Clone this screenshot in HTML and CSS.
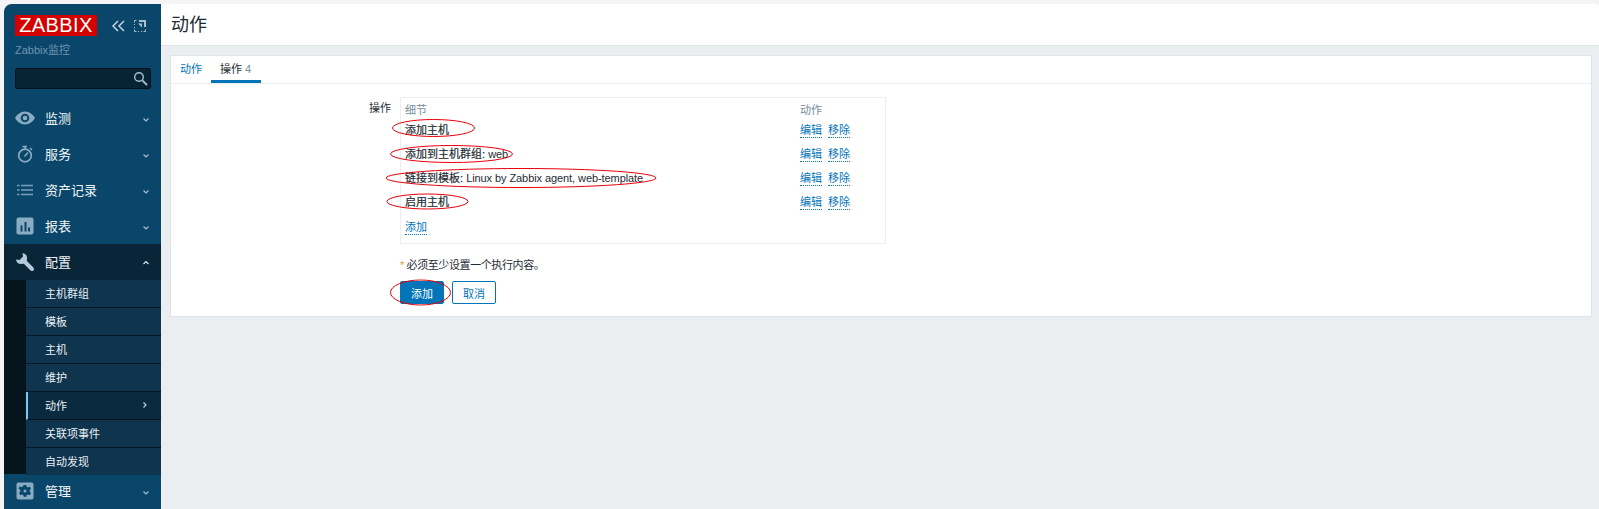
FILE: index.html
```html
<!DOCTYPE html>
<html lang="zh">
<head>
<meta charset="utf-8">
<title>动作</title>
<link rel="stylesheet" href="styles.css">
</head>
<body>
<div class="app">
  <aside class="sidebar">
    <div class="brand">
      <div class="logo">ZABBIX</div>
      <div class="brand-tools">
        <svg class="tool" width="16" height="14" viewBox="0 0 16 14"><path d="M7 2 2 7l5 5M13 2 8 7l5 5" fill="none" stroke="#c3d3de" stroke-width="1.500"/></svg>
        <svg class="tool" width="14" height="14" viewBox="0 0 14 14"><path d="M1.500 3.500V1.500H3.500M1.500 5V6M1.500 8V9M1.500 10.500V12.500H3.500M5 12.500H6M8 12.500H9M10.500 12.500H12.500V10.500" fill="none" stroke="#a9c0cf" stroke-width="1"/><path d="M6 1h7v7h-2V3H6z" fill="#a9c0cf"/><path d="M5 4.500h4v4z" fill="#a9c0cf"/></svg>
      </div>
    </div>
    <div class="server">Zabbix监控</div>
    <div class="search">
      <svg width="15" height="15" viewBox="0 0 15 15"><circle cx="6" cy="6" r="4.300" fill="none" stroke="#a9c0cf" stroke-width="1.400"/><path d="M9.300 9.300 14 14" stroke="#a9c0cf" stroke-width="1.800"/></svg>
    </div>
    <nav class="menu">
      <div class="menu-item">
        <svg class="mi" width="20" height="20" viewBox="0 0 20 20"><path fill-rule="evenodd" fill="#8aabc2" d="M10 3.500c4.500 0 8 3.200 10 6.500-2 3.300-5.500 6.500-10 6.500S2 13.300 0 10c2-3.300 5.500-6.500 10-6.500zm0 2.200a4.300 4.300 0 1 0 0 8.600 4.300 4.300 0 0 0 0-8.600zm0 2a2.300 2.300 0 1 1 0 4.600 2.300 2.300 0 0 1 0-4.600z"/></svg>
        <span class="ml">监测</span>
        <svg class="chev" width="6" height="4" viewBox="0 0 6 4"><path d="M.5.500 3 3 5.500.5" fill="none" stroke="#a9c0cf" stroke-width="1.100"/></svg>
      </div>
      <div class="menu-item">
        <svg class="mi" width="20" height="20" viewBox="0 0 20 20"><circle cx="10" cy="11.500" r="6.300" fill="none" stroke="#8aabc2" stroke-width="1.700"/><path d="M9.500 12.500 13 8.500" fill="none" stroke="#8aabc2" stroke-width="1.500"/><path d="M7.500 2.500h4.500M10 3v2.500M15 4l2 2" fill="none" stroke="#8aabc2" stroke-width="1.500"/></svg>
        <span class="ml">服务</span>
        <svg class="chev" width="6" height="4" viewBox="0 0 6 4"><path d="M.5.500 3 3 5.500.5" fill="none" stroke="#a9c0cf" stroke-width="1.100"/></svg>
      </div>
      <div class="menu-item">
        <svg class="mi" width="20" height="20" viewBox="0 0 20 20"><path d="M2 5.500h2.500M6 5.500h12M2 10h2.500M6 10h12M2 14.500h2.500M6 14.500h12" fill="none" stroke="#7b9fb8" stroke-width="1.700"/></svg>
        <span class="ml">资产记录</span>
        <svg class="chev" width="6" height="4" viewBox="0 0 6 4"><path d="M.5.500 3 3 5.500.5" fill="none" stroke="#a9c0cf" stroke-width="1.100"/></svg>
      </div>
      <div class="menu-item">
        <svg class="mi" width="20" height="20" viewBox="0 0 20 20"><rect x="1.500" y="1.500" width="17" height="17" rx="2" fill="#8aabc2"/><path d="M5.500 9.500h2v6h-2zM9.500 6h2v9.500h-2zM13 11.500h2v4h-2z" fill="#0a466a"/></svg>
        <span class="ml">报表</span>
        <svg class="chev" width="6" height="4" viewBox="0 0 6 4"><path d="M.5.500 3 3 5.500.5" fill="none" stroke="#a9c0cf" stroke-width="1.100"/></svg>
      </div>
      <div class="menu-item open">
        <svg class="mi" width="20" height="20" viewBox="0 0 20 20"><path fill="#b5cad8" d="M7.500 1A5.600 5.600 0 1 1 1 7.500L4.500 8 8 4.500z"/><path d="M8 8l9 9" stroke="#b5cad8" stroke-width="4" stroke-linecap="round"/></svg>
        <span class="ml">配置</span>
        <svg class="chev up" width="6" height="4" viewBox="0 0 6 4"><path d="M.5 3 3 .5 5.500 3" fill="none" stroke="#e4ecf1" stroke-width="1.100"/></svg>
      </div>
      <div class="submenu">
        <div class="sub-item">主机群组</div>
        <div class="sub-item">模板</div>
        <div class="sub-item">主机</div>
        <div class="sub-item">维护</div>
        <div class="sub-item active">动作<svg class="chev" width="4" height="6" viewBox="0 0 4 6"><path d="M.5.500 3 3 .5 5.500" fill="none" stroke="#c5d5e0" stroke-width="1.100"/></svg></div>
        <div class="sub-item">关联项事件</div>
        <div class="sub-item last">自动发现</div>
      </div>
      <div class="menu-item end">
        <svg class="mi" width="20" height="20" viewBox="0 0 20 20"><rect x="1.500" y="1.500" width="17" height="17" rx="2" fill="#8aabc2"/><path fill="#0a466a" fill-rule="evenodd" d="M8.700 4h2.600l.400 1.700 1.500.700 1.500-.900 1.300 2.300-1.300 1.200v1.800l1.300 1.200-1.300 2.300-1.500-.900-1.500.700-.400 1.700H8.700l-.400-1.700-1.500-.700-1.500.900-1.300-2.300 1.300-1.200V8.800L3.500 7.600l1.300-2.300 1.500.900 1.500-.700zM10 8.500a1.500 1.500 0 1 0 0 3 1.500 1.500 0 0 0 0-3z"/></svg>
        <span class="ml">管理</span>
        <svg class="chev" width="6" height="4" viewBox="0 0 6 4"><path d="M.5.500 3 3 5.500.5" fill="none" stroke="#a9c0cf" stroke-width="1.100"/></svg>
      </div>
    </nav>
  </aside>
  <main class="main">
    <header class="page-head"><h1>动作</h1></header>
    <section class="card">
      <div class="tabs">
        <span class="tab link">动作</span>
        <span class="tab current">操作 <span class="count">4</span></span>
      </div>
      <div class="form">
        <div class="form-label">操作</div>
        <div class="form-body">
          <div class="ops">
            <div class="ops-head"><span class="op-text">细节</span><span class="col-act">动作</span></div>
            <div class="op"><span class="op-text"><b>添加主机</b></span><span class="col-act"><a>编辑</a><a>移除</a></span></div>
            <div class="op"><span class="op-text"><b>添加到主机群组:</b> <span class="val">web</span></span><span class="col-act"><a>编辑</a><a>移除</a></span></div>
            <div class="op"><span class="op-text"><b>链接到模板:</b> <span class="val">Linux by Zabbix agent, web-template</span></span><span class="col-act"><a>编辑</a><a>移除</a></span></div>
            <div class="op"><span class="op-text"><b>启用主机</b></span><span class="col-act"><a>编辑</a><a>移除</a></span></div>
            <div class="op-add"><a>添加</a></div>
          </div>
          <p class="note"><span class="star">*</span> 必须至少设置一个执行内容。</p>
          <div class="buttons">
            <button class="btn primary">添加</button>
            <button class="btn">取消</button>
          </div>
        </div>
      </div>
    </section>
  </main>
</div>
<svg class="marks" width="1599" height="509" viewBox="0 0 1599 509">
  <g fill="none" stroke="#e8000b" stroke-width="1">
    <ellipse cx="433.500" cy="128" rx="41" ry="8.500"/>
    <ellipse cx="451.500" cy="154" rx="61" ry="8.500"/>
    <ellipse cx="521" cy="178" rx="135" ry="9.500"/>
    <ellipse cx="427.500" cy="201.500" rx="40.500" ry="7.500"/>
    <ellipse cx="420.500" cy="292.500" rx="30" ry="12.500"/>
  </g>
</svg>
</body>
</html>
```
FILE: styles.css
```css
* { box-sizing: border-box; }
html, body { margin: 0; height: 100%; overflow: hidden; }
body {
  position: relative;
  width: 1599px;
  height: 509px;
  background: #f4f4f4;
  font-family: "Liberation Sans", "Noto Sans CJK SC", sans-serif;
  font-size: 11px;
  color: #1f2c33;
}
.app {
  display: flex;
  height: 505px;
  margin: 4px 0 0 4px;
  background: #ebeef0;
  border-top-left-radius: 8px;
  border-top-right-radius: 4px;
  overflow: hidden;
}
.sidebar {
  width: 157px;
  flex: none;
  background: #0a466a;
  display: flex;
  flex-direction: column;
}
.brand {
  display: flex;
  align-items: center;
  justify-content: space-between;
  padding: 11px 14px 0 11px;
}
.logo {
  width: 82px;
  height: 21px;
  background: #d40000;
  color: #fff;
  font-size: 20px;
  line-height: 21px;
  text-align: center;
  letter-spacing: 0.4px;
}
.brand-tools { display: flex; gap: 6px; align-items: center; }
.tool { display: block; }
.server {
  margin: 7px 0 0 11px;
  height: 14px;
  line-height: 14px;
  font-size: 11px;
  color: #6f95af;
}
.search {
  margin: 11px 10px 0 11px;
  height: 21px;
  background: #072434;
  border: 1px solid #04131d;
  border-radius: 2px;
  display: flex;
  align-items: center;
  justify-content: flex-end;
  padding-right: 2px;
}
.menu { margin-top: 11px; display: flex; flex-direction: column; }
.menu-item {
  height: 36px;
  flex: none;
  display: flex;
  align-items: center;
  padding-left: 11px;
  color: #f2f6f8;
  font-size: 13px;
}
.menu-item.open { background: #092638; }
.menu-item.end { height: 34px; }
.mi { flex: none; width: 20px; height: 20px; }
.ml { margin: 0 0 2px 10px; flex: 1; }
.chev { flex: none; margin: 4px 12px 0 0; }
.chev.up { margin-top: 2px; }
.submenu {
  flex: none;
  height: 194px;
  padding-left: 22px;
  background: #05141d;
  display: flex;
  flex-direction: column;
}
.sub-item {
  height: 28px;
  flex: none;
  display: flex;
  align-items: center;
  justify-content: space-between;
  padding: 0 0 1px 19px;
  background: #0e344e;
  border-bottom: 1px solid #05141d;
  color: #eaf0f4;
  font-size: 11px;
}
.sub-item.last { border-bottom: 0; height: 27px; }
.sub-item.active { background: #0a2a40; border-left: 2px solid #7cc8f5; padding-left: 17px; }
.sub-item .chev { margin: 0 14px 0 0; }
.main { flex: 1; display: flex; flex-direction: column; min-width: 0; }
.page-head {
  height: 42px;
  background: #fff;
  border-bottom: 1px solid #dfe4e7;
  padding-left: 10px;
  display: flex;
  align-items: center;
  flex: none;
}
.page-head h1 { margin: 0; font-size: 18px; font-weight: 400; color: #1f2c33; line-height: 26px; }
.card {
  margin: 9px 7px 0 9px;
  height: 262px;
  background: #fff;
  border: 1px solid #dfe4e7;
  flex: none;
}
.tabs {
  display: flex;
  height: 28px;
  border-bottom: 1px solid #ebeef0;
}
.tab { padding: 0 9px; height: 27px; line-height: 26px; font-size: 11px; }
.tab.link { color: #0275b8; }
.tab.current { width: 50px; padding: 0 9px; border-bottom: 3px solid #0275b8; }
.count { color: #768d99; }
.form { display: flex; padding-top: 13px; }
.form-label { width: 220px; padding-top: 4px; text-align: right; line-height: 14px; }
.form-body { margin-left: 9px; width: 486px; }
.ops {
  height: 147px;
  border: 1px solid #ebeef0;
  padding: 5px 5px 0 4px;
}
.ops-head, .op { display: flex; }
.ops-head { height: 14px; line-height: 14px; color: #768d99; margin-bottom: 6px; }
.op { height: 24px; line-height: 14px; }
.op-text { width: 395px; flex: none; }
.op-text b { font-weight: 400; color: #1f2c33; -webkit-text-stroke: 0.2px #1f2c33; }
.val { letter-spacing: -0.08px; }
.col-act { display: flex; gap: 6px; }
a { color: #0275b8; border-bottom: 1px dotted #0275b8; height: 15px; }
.op-add { height: 16px; line-height: 14px; margin-top: 1px; }
.op-add a { display: inline-block; }
.note { margin: 14px 0 0 0; line-height: 14px; height: 14px; letter-spacing: -0.4px; }
.star { color: #e69c2f; }
.buttons { display: flex; gap: 8px; margin-top: 9px; }
.btn {
  width: 44px;
  height: 23px;
  padding: 0;
  background: #fff;
  border: 1px solid #0275b8;
  border-radius: 2px;
  color: #0275b8;
  font: inherit;
}
.btn.primary { background: #0275b8; color: #fff; }
.marks { position: absolute; left: 0; top: 0; pointer-events: none; }
```
